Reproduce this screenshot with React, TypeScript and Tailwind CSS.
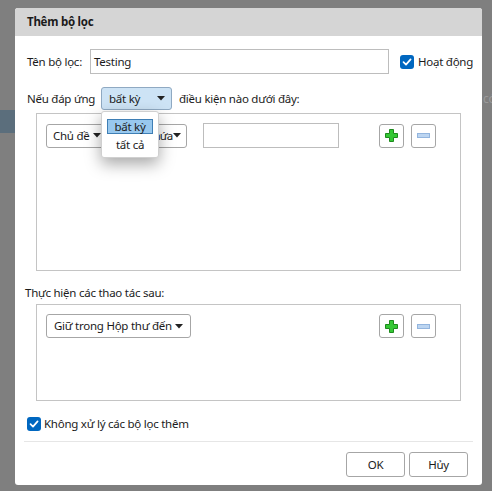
import React from "react";

const Caret = () => (
  <svg width="8" height="5" viewBox="0 0 8 5" className="shrink-0">
    <path d="M0 0 L8 0 L4 4.5 Z" fill="#222" />
  </svg>
);

const Check = () => (
  <span className="flex h-[14px] w-[14px] shrink-0 items-center justify-center rounded-[3px] bg-[#0067c0]">
    <svg width="10" height="10" viewBox="0 0 10 10">
      <path d="M1.5 5.2 L4 7.6 L8.6 2.4" fill="none" stroke="#fff" strokeWidth="1.7" strokeLinecap="round" strokeLinejoin="round" />
    </svg>
  </span>
);

const PlusBtn = () => (
  <div className="flex h-[24px] w-[25px] items-center justify-center rounded-[3px] border border-[#a6a6a6] bg-white">
    <svg width="13" height="13" viewBox="0 0 13 13">
      <path d="M4.5 0.5 H8.5 V4.5 H12.5 V8.5 H8.5 V12.5 H4.5 V8.5 H0.5 V4.5 H4.5 Z" fill="#35c835" stroke="#1d8a1d" strokeWidth="1" />
    </svg>
  </div>
);

const MinusBtn = () => (
  <div className="flex h-[24px] w-[25px] items-center justify-center rounded-[3px] border border-[#a6a6a6] bg-white">
    <svg width="13" height="5" viewBox="0 0 13 5">
      <rect x="0.5" y="0.5" width="12" height="4" fill="#bcd5f1" stroke="#93b5de" strokeWidth="1" />
    </svg>
  </div>
);

export default function App() {
  return (
    <div
      className="relative h-[491px] w-[492px] overflow-hidden whitespace-nowrap bg-[#7f7f7f] pl-[15px] pt-[8px] text-[11.5px] leading-[16px] tracking-[-0.25px] text-[#1b1b1b]"
      style={{ fontFamily: '"Noto Sans", "Open Sans", sans-serif' }}
    >
      {/* underlying page ghosts */}
      <div className="absolute left-0 top-[110px] h-[23px] w-[15px] bg-[#5b6e7c]" />
      <div className="absolute left-[483px] top-[91px] w-[9px] overflow-hidden text-[12px] text-[#9a9a9a]">có</div>

      <div className="relative flex h-[477px] w-[467px] flex-col overflow-hidden rounded-[3px] bg-white">
        <div className="flex h-[28px] shrink-0 items-center bg-[#d5d5d5] pl-[12px] font-bold leading-none">
          Thêm bộ lọc
        </div>

        <div className="flex flex-col pl-[12px]">
          {/* row 1 */}
          <div className="mt-[13px] flex h-[25px] items-center">
            <span className="w-[63px] shrink-0">Tên bộ lọc:</span>
            <div className="flex h-[25px] w-[299px] items-center border border-[#bdbdbd] pl-[3px]">Testing</div>
            <div className="ml-[11px] flex items-center gap-[4px]">
              <Check />
              <span>Hoạt động</span>
            </div>
          </div>

          {/* row 2 */}
          <div className="mt-[13px] flex h-[23px] items-center">
            <span className="w-[74px] shrink-0">Nếu đáp ứng</span>
            <div className="flex h-[23px] w-[71px] items-center justify-between rounded-[3px] border border-[#8fa9c2] bg-[#cde3f5] pl-[7px] pr-[6px]">
              <span>bất kỳ</span>
              <Caret />
            </div>
            <span className="ml-[7px]">điều kiện nào dưới đây:</span>
          </div>

          {/* box 1 */}
          <div className="ml-[9px] mt-[3px] flex h-[158px] w-[425px] flex-col border border-[#c4c4c4] pl-[9px] pt-[9px]">
            <div className="flex h-[25px] items-center">
              <div className="flex h-[24px] w-[61px] items-center justify-between rounded-[3px] border border-[#a6a6a6] pl-[6px] pr-[5px]">
                <span>Chủ đề</span>
                <Caret />
              </div>
              <div className="ml-[3px] flex h-[24px] w-[77px] items-center justify-between overflow-hidden rounded-[3px] border border-[#a6a6a6] pl-[6px] pr-[5px]">
                <span className="tracking-[-0.9px]">không chứa</span>
                <Caret />
              </div>
              <div className="ml-[16px] h-[25px] w-[136px] border border-[#bdbdbd]" />
              <div className="ml-[40px]">
                <PlusBtn />
              </div>
              <div className="ml-[7px]">
                <MinusBtn />
              </div>
            </div>
          </div>

          <div className="mt-[14px] -ml-[2px] h-[18px]">Thực hiện các thao tác sau:</div>

          {/* box 2 */}
          <div className="ml-[9px] mt-[1px] flex h-[97px] w-[425px] flex-col border border-[#c4c4c4] pl-[9px] pt-[9px]">
            <div className="flex h-[24px] items-center">
              <div className="flex h-[24px] w-[145px] items-center justify-between rounded-[3px] border border-[#a6a6a6] pl-[7px] pr-[7px]">
                <span>Giữ trong Hộp thư đến</span>
                <Caret />
              </div>
              <div className="ml-[188px]">
                <PlusBtn />
              </div>
              <div className="ml-[7px]">
                <MinusBtn />
              </div>
            </div>
          </div>

          <div className="mt-[15px] flex h-[16px] items-center gap-[3px]">
            <Check />
            <span>Không xử lý các bộ lọc thêm</span>
          </div>
        </div>

        <div className="mx-[9px] mt-[9px] h-px bg-[#e6e6e6]" />

        <div className="mt-[10px] flex justify-end gap-[4px] pr-[14px]">
          <div className="flex h-[25px] w-[59px] items-center justify-center rounded-[3px] border border-[#a6a6a6] bg-white">OK</div>
          <div className="flex h-[25px] w-[59px] items-center justify-center rounded-[3px] border border-[#a6a6a6] bg-white">Hủy</div>
        </div>

        {/* popup */}
        <div className="absolute left-[86px] top-[103px] flex h-[47px] w-[58px] flex-col rounded-[3px] border border-[#d0d0d0] bg-white px-[5px] pt-[7px] shadow-[0_6px_16px_rgba(0,0,0,0.35)]">
          <div className="flex h-[15px] w-[46px] items-center justify-center border border-[#3f7fb5] bg-[#98c8ee]">bất kỳ</div>
          <div className="mt-[3px] flex h-[16px] items-center justify-center">tất cả</div>
        </div>
      </div>
    </div>
  );
}
